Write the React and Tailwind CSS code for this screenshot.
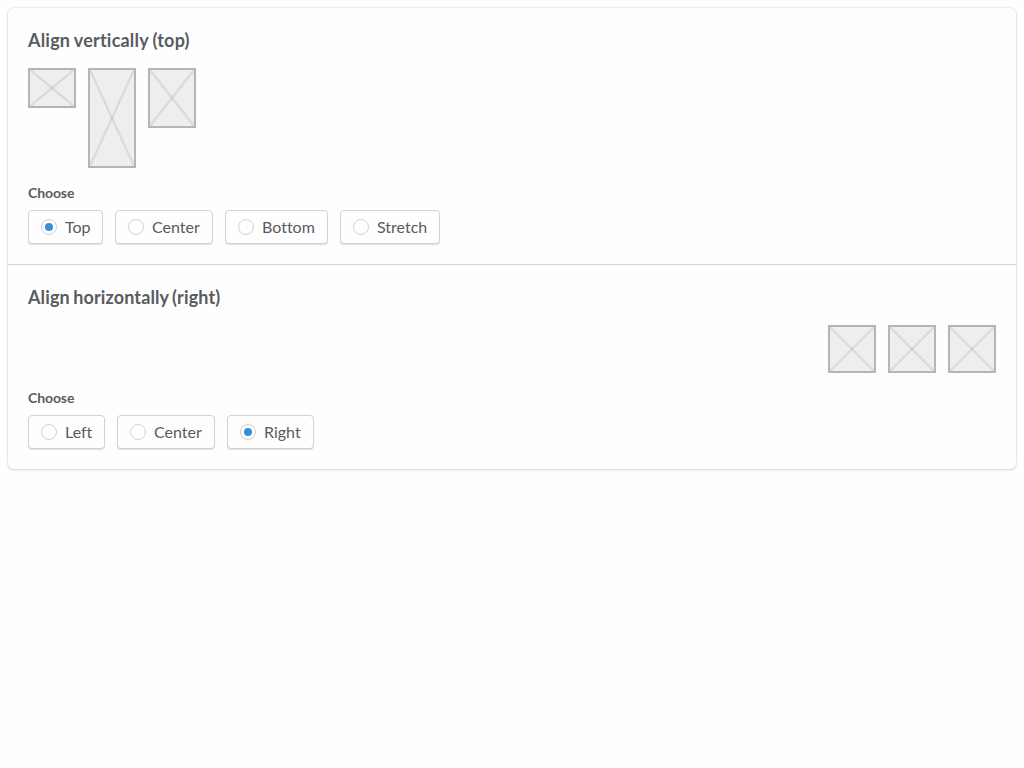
import { useState } from "react";

function Placeholder({ className = "" }) {
  return (
    <div
      className={`w-12 border-2 border-[#b5b5b5] bg-[#eeeeee] bg-[linear-gradient(to_top_right,transparent_calc(50%-1.5px),rgba(0,0,0,0.08)_calc(50%-1px),rgba(0,0,0,0.08)_calc(50%+1px),transparent_calc(50%+1.5px)),linear-gradient(to_bottom_right,transparent_calc(50%-1.5px),rgba(0,0,0,0.08)_calc(50%-1px),rgba(0,0,0,0.08)_calc(50%+1px),transparent_calc(50%+1.5px))] ${className}`}
    />
  );
}

function Options({ name, options, value, onChange }) {
  return (
    <fieldset>
      <legend className="mb-[7px] text-sm leading-5 font-bold tracking-[-0.1px]">Choose</legend>
      <div className="flex gap-3">
        {options.map(([option, width]) => (
          <label
            key={option}
            className={`flex h-[34px] cursor-pointer items-center gap-2 rounded border border-[#cdd3da] bg-[#fefefe] px-3 shadow-[0_1px_1px_rgba(0,0,0,0.12)] ${width}`}
          >
            <input
              type="radio"
              className="sr-only"
              name={name}
              checked={value === option}
              onChange={() => onChange(option)}
            />
            <span className="flex size-4 shrink-0 items-center justify-center rounded-full border border-[#cdd3da]">
              {value === option && <span className="size-2 rounded-full bg-[#3b8dd6]" />}
            </span>
            <span>{option}</span>
          </label>
        ))}
      </div>
    </fieldset>
  );
}

const vertical = { Top: "items-start", Center: "items-center", Bottom: "items-end", Stretch: "items-stretch" };
const horizontal = { Left: "justify-start", Center: "justify-center", Right: "justify-end" };

const verticalOptions = [
  ["Top", "w-[75px]"],
  ["Center", "w-[98px]"],
  ["Bottom", "w-[103px]"],
  ["Stretch", "w-[100px]"],
];
const horizontalOptions = [
  ["Left", "w-[77px]"],
  ["Center", "w-[98px]"],
  ["Right", "w-[87px]"],
];

export default function App() {
  const [v, setV] = useState("Top");
  const [h, setH] = useState("Right");
  return (
    <div className="min-h-screen bg-[#fefefe] p-2 font-['Lato',sans-serif] text-base leading-6 text-[#595b5e] [font-variant-ligatures:none]">
      <main className="rounded-md bg-[#fefefe] shadow-[0_0_0_1px_rgba(0,0,0,0.05),0_1px_3px_rgba(0,0,0,0.12)]">
        <section className="border-b border-[#cdd3da] p-5">
          <h2 className="mb-4 text-lg leading-6 font-bold tracking-[0.2px] [word-spacing:-0.5px]">
            Align vertically ({v.toLowerCase()})
          </h2>
          <div className={`mb-[15px] flex gap-3 ${vertical[v]}`}>
            <Placeholder className="min-h-10" />
            <Placeholder className="min-h-25" />
            <Placeholder className="min-h-15" />
          </div>
          <Options name="vertical" options={verticalOptions} value={v} onChange={setV} />
        </section>
        <section className="p-5">
          <h2 className="mb-4 text-lg leading-6 font-bold tracking-[0.13px] [word-spacing:-1.2px]">
            Align horizontally ({h.toLowerCase()})
          </h2>
          <div className={`mb-[15px] flex gap-3 ${horizontal[h]}`}>
            <Placeholder className="h-12" />
            <Placeholder className="h-12" />
            <Placeholder className="h-12" />
          </div>
          <Options name="horizontal" options={horizontalOptions} value={h} onChange={setH} />
        </section>
      </main>
    </div>
  );
}
